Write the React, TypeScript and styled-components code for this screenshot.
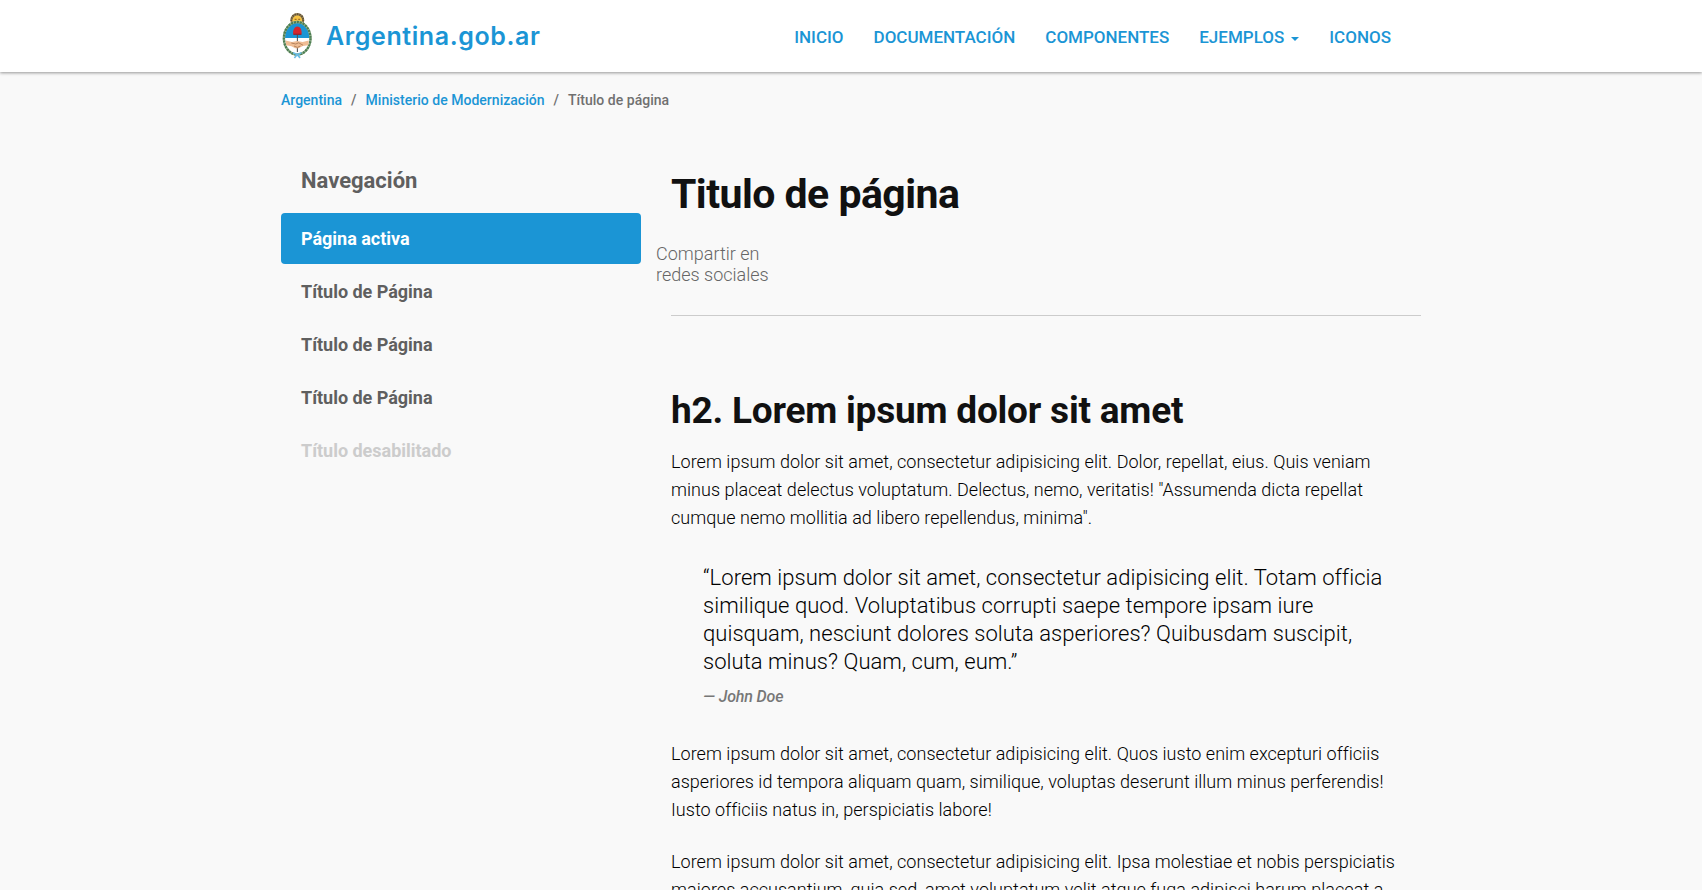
import React from 'react';
import styled, { createGlobalStyle, css } from 'styled-components';

const BLUE = '#1b95d5';

const GlobalStyle = createGlobalStyle`
  *, *::before, *::after { box-sizing: border-box; }
  html, body { margin: 0; padding: 0; }
  body {
    background: #f9f9f9;
    color: #111;
    font-family: Roboto, "Liberation Sans", sans-serif;
    font-size: 18px;
    font-weight: 300;
    line-height: 28px;
  }
  a { color: inherit; text-decoration: none; }
`;

const Page = styled.div`
  height: 890px;
  overflow: hidden;
`;

const Header = styled.header`
  height: 72px;
  background: #fff;
  box-shadow: 0 1px 3px rgba(0, 0, 0, 0.4);
`;

const Container = styled.div`
  width: 1140px;
  margin: 0 auto;
`;

const HeaderRow = styled(Container)`
  display: flex;
  justify-content: space-between;
  align-items: flex-start;
  height: 72px;
`;

const Brand = styled.a`
  display: flex;
  align-items: flex-start;
  padding: 12px 0 0 1px;
  color: ${BLUE};
`;

const Crest = styled.svg`
  width: 30px;
  height: 47px;
  margin-right: 14px;
`;

const Nav = styled.nav`
  display: flex;
  gap: 30px;
  padding: 23px 30px 0 0;
`;

const NavLink = styled.a`
  display: flex;
  align-items: center;
  color: ${BLUE};
  font-size: 17px;
  font-weight: 500;
  line-height: 28px;
`;

const Caret = styled.span`
  margin: 3px 0 0 7px;
  border-top: 4px solid;
  border-left: 4px solid transparent;
  border-right: 4px solid transparent;
`;

const Breadcrumb = styled.ol`
  display: flex;
  margin: 0;
  padding: 18px 0 0;
  height: 82px;
  list-style: none;
  font-size: 14px;
  font-weight: 500;
  letter-spacing: 0.02px;
  line-height: 20px;
`;

const Crumb = styled.li<{ $current?: boolean }>`
  color: ${(p) => (p.$current ? '#707070' : BLUE)};

  &:not(:first-child)::before {
    content: '/';
    padding: 0 9px;
    color: #707070;
  }
`;

const Columns = styled(Container)`
  display: flex;
  gap: 30px;
`;

const Sidebar = styled.aside`
  width: 360px;
`;

const SideTitle = styled.h4`
  margin: 0;
  padding: 12px 20px 0;
  height: 59px;
  color: #5f5f5f;
  font-size: 22px;
  font-weight: 700;
  letter-spacing: 0;
  line-height: 30px;
`;

const SideList = styled.ul`
  display: flex;
  flex-direction: column;
  gap: 2px;
  margin: 0;
  padding: 0;
  list-style: none;
`;

const SideItem = styled.li<{ $state?: 'active' | 'disabled' }>`
  height: 51px;
  padding: 0 20px;
  border-radius: 4px;
  color: #5f5f5f;
  font-weight: 700;
  letter-spacing: -0.02px;
  line-height: 51px;
  ${(p) => p.$state === 'active' && css`background: ${BLUE}; color: #fff;`}
  ${(p) => p.$state === 'disabled' && css`color: #ccc;`}
`;

const Main = styled.main`
  width: 750px;
`;

const PageTitle = styled.h1`
  margin: 0;
  padding-top: 16px;
  font-size: 41px;
  font-weight: 700;
  letter-spacing: -0.53px;
  line-height: 48px;
`;

const Share = styled.p`
  width: 140px;
  margin: 25px 0 0 -15px;
  color: #666;
  line-height: 21px;
`;

const Rule = styled.hr`
  height: 1px;
  margin: 30px 0 75px;
  border: 0;
  background: #ccc;
`;

const SectionTitle = styled.h2`
  margin: 0 0 17px;
  font-size: 37px;
  font-weight: 700;
  letter-spacing: -0.22px;
  line-height: 40px;
`;

const Paragraph = styled.p`
  margin: 0 0 24px;
  padding-right: 16px;
  color: #000;
  letter-spacing: 0.034px;
`;

const Quote = styled.blockquote`
  margin: 0 0 29px;
  padding: 8px 32px 0;
  color: #000;
  font-size: 22px;
`;

const QuoteText = styled.p`
  margin: 0 0 7px;
  letter-spacing: 0.04px;
`;

const Cite = styled.footer`
  color: #777;
  font-size: 16px;
  font-style: italic;
  font-weight: 500;
  letter-spacing: -0.15px;
`;

const Wordmark = styled.span`
  margin-top: 8px;
  font-family: Inter, sans-serif;
  font-size: 25px;
  font-weight: 600;
  letter-spacing: 0.6px;
  line-height: 32px;
`;

const CoatOfArms = () => (
  <Crest viewBox="0 0 30 47" aria-hidden="true">
    <circle cx="15.3" cy="8" r="7" fill="#8f7b55" />
    <circle cx="15.3" cy="8" r="5.8" fill="none" stroke="#5e5137" strokeWidth="2" strokeDasharray="1.2 1.2" />
    <circle cx="15.3" cy="8.3" r="4.8" fill="#f7c443" />
    <path d="M12.6 7.3h2M16.2 7.3h2M14 10.4h3" stroke="#8c5c22" strokeWidth="1" />
    <ellipse cx="15.2" cy="26" rx="13.2" ry="16.2" fill="#fff" />
    <path d="M2 26a13.2 16.2 0 0 1 26.4 0z" fill={BLUE} />
    <ellipse cx="15.2" cy="26.3" rx="13.3" ry="16.3" fill="none" stroke="#a3bd9d" strokeWidth="2.4" />
    <ellipse cx="15.2" cy="26.3" rx="13.3" ry="16.3" fill="none" stroke="#4d7d52" strokeWidth="2.3" strokeDasharray="2.2 .8" />
    <path d="M15.4 22v18" stroke="#555" strokeWidth="1.1" />
    <path d="M11.2 22.3c-.6-3.7 1-7.4 4-7.8 3.7.2 4.8 4.2 4.3 7.8z" fill="#d6262d" />
    <path d="M11.4 22.3h8" stroke="#8d2935" strokeWidth="1.3" />
    <path d="M3.6 28.6l6.4 1.3 5.2-.9 5.4.9 6.2-1.3-.4 4.6-5.6.8-4.2 2.3-3.4-.1-3.7-2-5.5-.9z" fill="#efbd94" />
    <path d="M9.3 31l4.4 1 3-1.2 4.3 2.4M12 34l3.4 1.4 3-1.4" fill="none" stroke="#a6734e" strokeWidth=".8" />
    <path d="M11 40.8l4.2 1.8 4.3-1.8M15.2 42.6l-2.8 3.3M15.2 42.6l2.9 3.3" fill="none" stroke="#6bbce5" strokeWidth="1.6" />
  </Crest>
);

const navLinks = ['Inicio', 'Documentación', 'Componentes', 'Ejemplos', 'Iconos'];

export default function App() {
  return (
    <Page>
      <GlobalStyle />
      <Header>
        <HeaderRow>
          <Brand>
            <CoatOfArms />
            <Wordmark>Argentina.gob.ar</Wordmark>
          </Brand>
          <Nav>
            {navLinks.map((label) => (
              <NavLink key={label}>
                {label.toUpperCase()}
                {label === 'Ejemplos' && <Caret />}
              </NavLink>
            ))}
          </Nav>
        </HeaderRow>
      </Header>
      <Container>
        <Breadcrumb>
          <Crumb>Argentina</Crumb>
          <Crumb>Ministerio de Modernización</Crumb>
          <Crumb $current>Título de página</Crumb>
        </Breadcrumb>
      </Container>
      <Columns>
        <Sidebar>
          <SideTitle>Navegación</SideTitle>
          <SideList>
            <SideItem $state="active">Página activa</SideItem>
            <SideItem>Título de Página</SideItem>
            <SideItem>Título de Página</SideItem>
            <SideItem>Título de Página</SideItem>
            <SideItem $state="disabled">Título desabilitado</SideItem>
          </SideList>
        </Sidebar>
        <Main>
          <PageTitle>Titulo de página</PageTitle>
          <Share>
            Compartir en
            <br />
            redes sociales
          </Share>
          <Rule />
          <SectionTitle>h2. Lorem ipsum dolor sit amet</SectionTitle>
          <Paragraph>
            Lorem ipsum dolor sit amet, consectetur adipisicing elit. Dolor, repellat, eius. Quis veniam
            minus placeat delectus voluptatum. Delectus, nemo, veritatis! "Assumenda dicta repellat
            cumque nemo mollitia ad libero repellendus, minima".
          </Paragraph>
          <Quote>
            <QuoteText>
              “Lorem ipsum dolor sit amet, consectetur adipisicing elit. Totam officia similique quod.
              Voluptatibus corrupti saepe tempore ipsam iure quisquam, nesciunt dolores soluta
              asperiores? Quibusdam suscipit, soluta minus? Quam, cum, eum.”
            </QuoteText>
            <Cite>— John Doe</Cite>
          </Quote>
          <Paragraph>
            Lorem ipsum dolor sit amet, consectetur adipisicing elit. Quos iusto enim excepturi officiis
            asperiores id tempora aliquam quam, similique, voluptas deserunt illum minus perferendis!
            Iusto officiis natus in, perspiciatis labore!
          </Paragraph>
          <Paragraph>
            Lorem ipsum dolor sit amet, consectetur adipisicing elit. Ipsa molestiae et nobis perspiciatis
            maiores accusantium, quia sed, amet voluptatum velit atque fuga adipisci harum placeat a
          </Paragraph>
        </Main>
      </Columns>
    </Page>
  );
}
